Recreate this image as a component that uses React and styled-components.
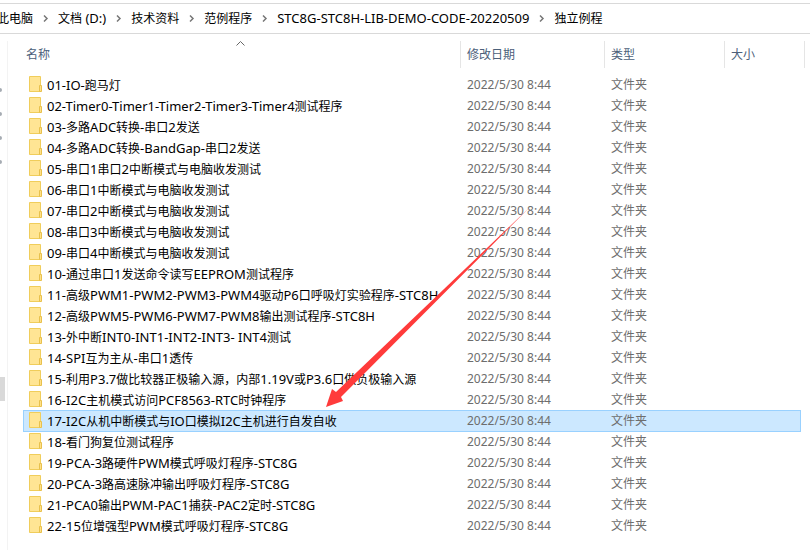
import React from 'react';
import styled, { createGlobalStyle } from 'styled-components';

const GlobalStyle = createGlobalStyle`
    * {
        box-sizing: border-box;
    }

    body {
        margin: 0;
        background: #fff;
        color: #000;
        font-family: "Noto Sans", "Noto Sans CJK SC", sans-serif;
        font-size: 12px;
        line-height: 20px;
        overflow: hidden;
    }
`;

const PlainButton = styled.button`
    border: 0;
    padding: 0;
    background: none;
    color: inherit;
    font: inherit;
    text-align: left;
    white-space: nowrap;
`;

const AddressBar = styled.nav`
    margin-top: 3px;
    height: 31px;
    border-top: 1px solid #d9d9d9;
    border-bottom: 1px solid #d9d9d9;
    overflow: hidden;
`;

const Crumbs = styled.ol`
    display: flex;
    align-items: center;
    height: 100%;
    margin: 0 0 0 -3px;
    padding: 0;
    list-style: none;
`;

const Crumb = styled.li`
    display: flex;
    align-items: center;
    flex-shrink: 0;
`;

const CrumbArrow = styled.svg`
    width: 25px;
    height: 7px;
`;

const Main = styled.div`
    display: flex;
    padding-top: 7px;
`;

const TreeEdge = styled.aside`
    flex: 0 0 8px;
    height: calc(100vh - 41px);
    border-right: 1px solid #f3f3f3;
`;

const Pins = styled.div`
    display: flex;
    flex-direction: column;
    gap: 20px;
    padding-top: 47px;
`;

const Pin = styled.div`
    width: 2px;
    height: 4px;
    border-radius: 0 2px 2px 0;
    background: #a6acb3;
`;

const ScrollThumb = styled.div`
    width: 5px;
    height: 24px;
    margin-top: 213px;
    background: #d9d9d9;
`;

const FileTable = styled.table`
    display: block;
    flex: 1;
    min-width: 0;
    padding: 0 5px 0 15px;

    thead,
    tbody {
        display: block;
    }

    tbody {
        padding: 6px 4px 0 0;
    }
`;

const HeadRow = styled.tr`
    display: grid;
    grid-template-columns: minmax(0, 1fr) 144px 120px 80px;
    height: 27px;
    color: #4c607a;
`;

const HeadCell = styled.th`
    position: relative;
    display: flex;
    align-items: center;
    padding: 0 0 0 ${props => (props.$first ? '3px' : '6px')};
    border-right: 1px solid #e5e5e5;
    font-weight: normal;
`;

const SortMark = styled.svg`
    position: absolute;
    top: 0;
    left: 50%;
    width: 9px;
    height: 5px;
    margin-left: -6px;
`;

const Row = styled.tr`
    display: grid;
    grid-template-columns: minmax(0, 1fr) 144px 120px 76px;
    height: ${props => (props.$selected ? '22px' : '21px')};
    margin-bottom: ${props => (props.$selected ? '-1px' : '0')};
    background: ${props => (props.$selected ? '#cce8ff' : 'transparent')};
    box-shadow: ${props => (props.$selected ? 'inset 0 0 0 1px #99d1ff' : 'none')};
`;

const NameCell = styled.td`
    display: flex;
    gap: 4px;
    padding: 1px 0 0 6px;
    white-space: nowrap;
`;

const InfoCell = styled.td`
    padding: 1px 0 0 6px;
    color: #6d6d6d;
    white-space: nowrap;
`;

const FolderSvg = styled.svg`
    flex: none;
    width: 14px;
    height: 17px;
    margin-top: 1px;
`;

const Latin = styled.span`
    font-size: 13px;
`;

// the red marker lies over the list
const Pointer = styled.svg`
    position: absolute;
    top: 206px;
    left: 325px;
    width: 206px;
    height: 202px;
    pointer-events: none;
`;

const path = [
    '此电脑',
    '文档 (D:)',
    '技术资料',
    '范例程序',
    'STC8G-STC8H-LIB-DEMO-CODE-20220509',
    '独立例程',
];

const folders = [
    '01-IO-跑马灯',
    '02-Timer0-Timer1-Timer2-Timer3-Timer4测试程序',
    '03-多路ADC转换-串口2发送',
    '04-多路ADC转换-BandGap-串口2发送',
    '05-串口1串口2中断模式与电脑收发测试',
    '06-串口1中断模式与电脑收发测试',
    '07-串口2中断模式与电脑收发测试',
    '08-串口3中断模式与电脑收发测试',
    '09-串口4中断模式与电脑收发测试',
    '10-通过串口1发送命令读写EEPROM测试程序',
    '11-高级PWM1-PWM2-PWM3-PWM4驱动P6口呼吸灯实验程序-STC8H',
    '12-高级PWM5-PWM6-PWM7-PWM8输出测试程序-STC8H',
    '13-外中断INT0-INT1-INT2-INT3- INT4测试',
    '14-SPI互为主从-串口1透传',
    '15-利用P3.7做比较器正极输入源，内部1.19V或P3.6口做负极输入源',
    '16-I2C主机模式访问PCF8563-RTC时钟程序',
    '17-I2C从机中断模式与IO口模拟I2C主机进行自发自收',
    '18-看门狗复位测试程序',
    '19-PCA-3路硬件PWM模式呼吸灯程序-STC8G',
    '20-PCA-3路高速脉冲输出呼吸灯程序-STC8G',
    '21-PCA0输出PWM-PAC1捕获-PAC2定时-STC8G',
    '22-15位增强型PWM模式呼吸灯程序-STC8G',
];

const selected = 16;

// Latin runs are set a size larger than the Chinese around them
const Name = ({ text }) => (
    <span>
        {text.split(/([ -~]+)/).map((part, i) => (
            i % 2 ? <Latin key={i}>{part}</Latin> : part
        ))}
    </span>
);

const FolderIcon = () => (
    <FolderSvg viewBox="0 0 14 17" aria-hidden="true">
        <path d="M0.5 0.5H11.5V15.5H0.5Z" fill="#ffe594" stroke="#f0cd5b" />
        <path d="M10.5 9.5H12.5V15.5H10.5Z" fill="#ffe089" stroke="#e8c14d" />
    </FolderSvg>
);

export default function App() {
    return (
        <>
            <GlobalStyle />
            <AddressBar>
                <Crumbs>
                    {path.map((name, i) => (
                        <Crumb key={name}>
                            <PlainButton type="button"><Name text={name} /></PlainButton>
                            {i < path.length - 1 && (
                                <CrumbArrow viewBox="0 0 25 7" aria-hidden="true">
                                    <path d="M11 0.5L14 3.5L11 6.5" fill="none" stroke="#777" strokeWidth="1.5" />
                                </CrumbArrow>
                            )}
                        </Crumb>
                    ))}
                </Crumbs>
            </AddressBar>
            <Main>
                <TreeEdge>
                    <Pins>
                        <Pin />
                        <Pin />
                        <Pin />
                        <Pin />
                    </Pins>
                    <ScrollThumb />
                </TreeEdge>
                <FileTable>
                    <thead>
                        <HeadRow>
                            <HeadCell $first>
                                <PlainButton type="button">名称</PlainButton>
                                <SortMark viewBox="0 0 9 5" aria-hidden="true">
                                    <path d="M0.5 4.5L4.5 0.5L8.5 4.5" fill="none" stroke="#666" />
                                </SortMark>
                            </HeadCell>
                            <HeadCell><PlainButton type="button">修改日期</PlainButton></HeadCell>
                            <HeadCell><PlainButton type="button">类型</PlainButton></HeadCell>
                            <HeadCell><PlainButton type="button">大小</PlainButton></HeadCell>
                        </HeadRow>
                    </thead>
                    <tbody>
                        {folders.map((name, i) => (
                            <Row key={name} $selected={i === selected}>
                                <NameCell>
                                    <FolderIcon />
                                    <Name text={name} />
                                </NameCell>
                                <InfoCell>2022/5/30 8:44</InfoCell>
                                <InfoCell>文件夹</InfoCell>
                                <InfoCell />
                            </Row>
                        ))}
                    </tbody>
                </FileTable>
            </Main>
            <Pointer viewBox="0 0 206 202" aria-hidden="true">
                <path d="M205 1L11 186L7 183L1 201L18 195L16 191Z" fill="#ff3b3b" />
            </Pointer>
        </>
    );
}
